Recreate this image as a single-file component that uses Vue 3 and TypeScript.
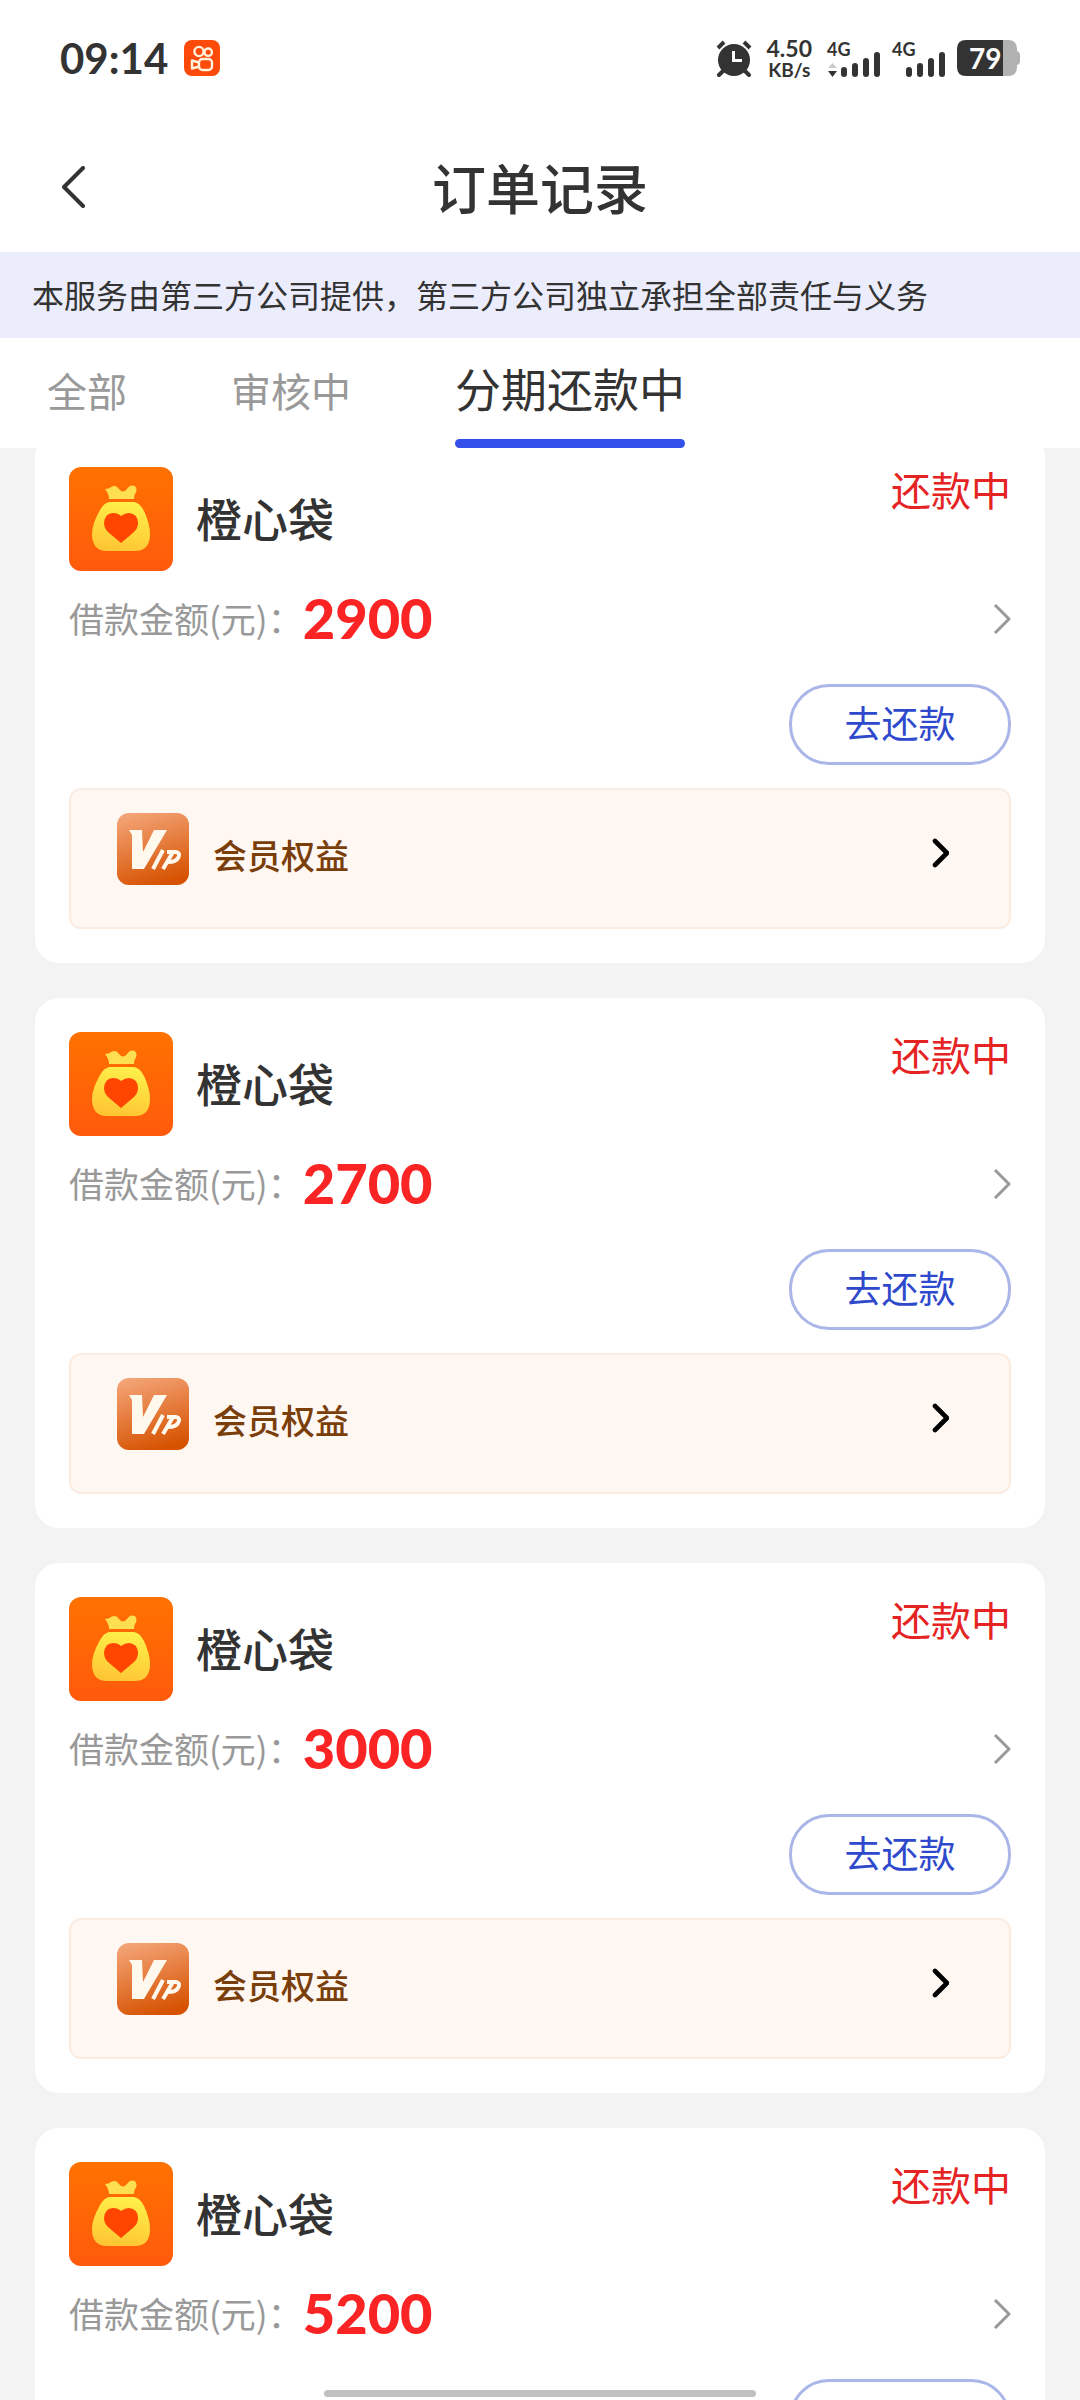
<script setup lang="ts">
import { ref } from 'vue'

interface Order {
  id: number
  name: string
  amount: number
  status: string
}

const tabs: string[] = ['全部', '审核中', '分期还款中']
const activeTab = ref<number>(2)

const orders: Order[] = [
  { id: 1, name: '橙心袋', amount: 2900, status: '还款中' },
  { id: 2, name: '橙心袋', amount: 2700, status: '还款中' },
  { id: 3, name: '橙心袋', amount: 3000, status: '还款中' },
  { id: 4, name: '橙心袋', amount: 5200, status: '还款中' },
]

const signals: { id: string; data: boolean }[] = [
  { id: 'sim1', data: true },
  { id: 'sim2', data: false },
]
</script>

<template>
  <div class="screen">
    <header class="top">
      <div class="status-bar">
        <div class="status-left">
          <span class="clock">09:14</span>
          <svg class="app-badge" width="36" height="36" viewBox="0 0 36 36" aria-hidden="true">
            <rect width="36" height="36" rx="8" fill="#fb4a0a" />
            <g fill="none" stroke="#fff1dc" stroke-width="2.4" stroke-linejoin="round">
              <circle cx="15" cy="11.5" r="4.6" />
              <circle cx="24.2" cy="12.2" r="3.7" />
              <rect x="15" y="19" width="13" height="11" rx="3.5" />
              <path d="M15 22.5 L8 20.5 V28.5 L15 26.5" />
            </g>
          </svg>
        </div>
        <div class="status-right">
          <svg class="alarm" width="36" height="37" viewBox="0 0 36 37" aria-hidden="true">
            <circle cx="18" cy="20" r="16" fill="#333" />
            <path d="M2 8 L8 2 M34 8 L28 2" stroke="#333" stroke-width="4" />
            <path d="M7 31 L3 35 M29 31 L33 35" stroke="#333" stroke-width="4" stroke-linecap="round" />
            <path d="M17.500 11 V20.500 H26" fill="none" stroke="#fff" stroke-width="3" />
          </svg>
          <div class="speed">
            <span class="speed-value">4.50</span>
            <span class="speed-unit">KB/s</span>
          </div>
          <div v-for="s in signals" :key="s.id" class="signal">
            <span class="net">4G</span>
            <svg width="53" height="38" viewBox="0 0 53 38" aria-hidden="true">
              <path v-if="s.data" d="M1 29 L5.500 24 L10 29 Z" fill="#ccc" />
              <path v-if="s.data" d="M1 32 L5.500 38 L10 32 Z" fill="#333" />
              <g fill="#333">
                <rect x="14" y="28" width="6" height="10" rx="3" />
                <rect x="25" y="24" width="6" height="14" rx="3" />
                <rect x="36" y="19" width="6" height="19" rx="3" />
                <rect x="47" y="13" width="6" height="25" rx="3" />
              </g>
            </svg>
          </div>
          <div class="battery">
            <svg width="63" height="36" viewBox="0 0 63 36" aria-hidden="true">
              <path d="M46 0 H51 Q60 0 60 9 V11 Q63 12 63 15 V21 Q63 24 60 25 V27 Q60 36 51 36 H46 Z" fill="#b1b1b1" />
              <path d="M9 0 H46 V36 H9 Q0 36 0 27 V9 Q0 0 9 0 Z" fill="#333" />
            </svg>
            <span class="level">79</span>
          </div>
        </div>
      </div>

      <div class="nav">
        <button class="back" type="button" aria-label="返回">
          <svg width="24" height="42" viewBox="0 0 24 42">
            <path d="M21 2 L2 21 L21 40" fill="none" stroke="#333" stroke-width="4" stroke-linecap="round" stroke-linejoin="round" />
          </svg>
        </button>
        <h1 class="title">订单记录</h1>
      </div>

      <p class="notice">本服务由第三方公司提供，第三方公司独立承担全部责任与义务</p>

      <nav class="tabs">
        <button
          v-for="(tab, i) in tabs"
          :key="tab"
          type="button"
          class="tab"
          :class="{ active: i === activeTab }"
          @click="activeTab = i"
        >
          {{ tab }}
        </button>
      </nav>
    </header>

    <main class="list">
      <article v-for="order in orders" :key="order.id" class="card">
        <div class="card-head">
          <svg class="logo" width="104" height="104" viewBox="0 0 104 104" aria-hidden="true">
            <defs>
              <linearGradient :id="'bg' + order.id" x1="0" y1="0" x2="0" y2="1">
                <stop offset="0" stop-color="#ff7200" />
                <stop offset="1" stop-color="#ff5a0c" />
              </linearGradient>
              <linearGradient :id="'bag' + order.id" x1="0.6" y1="0" x2="0.4" y2="1">
                <stop offset="0" stop-color="#fff04a" />
                <stop offset="1" stop-color="#ffc533" />
              </linearGradient>
            </defs>
            <rect width="104" height="104" rx="12" :fill="`url(#bg${order.id})`" />
            <path
              d="M36 22 Q40 22 42 20 Q47 17 50 22 Q54 27 58 22 Q61 17 66 19 Q69 23 66 27 Q65 29 65 32 H40 Q40 27 36 22 Z"
              fill="#ffdf52"
            />
            <path
              d="M40 35 H65 Q71 36 75 44 Q81 57 81 67 Q81 84 66 84 H38 Q23 84 23 67 Q23 57 31 43 Q35 36 40 35 Z"
              :fill="`url(#bag${order.id})`"
            />
            <path
              d="M52 76 L39 65 Q35 61 35 56 Q36 46 44 46 Q49 46 52 49 Q56 46 60 46 Q69 47 69 56 Q69 61 65 65 Z"
              fill="#ff4500"
            />
          </svg>
          <h2 class="name">{{ order.name }}</h2>
          <span class="state">{{ order.status }}</span>
        </div>

        <div class="amount-row">
          <span class="label">借款金额(元)：</span>
          <strong class="amount">{{ order.amount }}</strong>
          <svg class="more" width="18" height="32" viewBox="0 0 18 32" aria-hidden="true">
            <path d="M2 3 L16 17 L2 31" fill="none" stroke="#999" stroke-width="3" stroke-linejoin="round" />
          </svg>
        </div>

        <div class="actions">
          <button class="repay" type="button">去还款</button>
        </div>

        <a class="vip" href="#">
          <svg width="72" height="72" viewBox="0 0 72 72" aria-hidden="true">
            <defs>
              <linearGradient :id="'vip' + order.id" x1="0.3" y1="0" x2="0.6" y2="1">
                <stop offset="0" stop-color="#f3a274" />
                <stop offset="1" stop-color="#d65200" />
              </linearGradient>
            </defs>
            <rect width="72" height="72" rx="12" :fill="`url(#vip${order.id})`" />
            <path d="M12 17 H25 L26 39 L37 17 H50 L27 56 H15 V22 Z" fill="#fff8ec" />
            <g fill="none" stroke="#fff8ec" stroke-width="4">
              <path d="M46 37 L36 56" />
              <path d="M56 39 L46 56 M50 39 H59 Q64 40 61 45 Q59 49 51 49" />
            </g>
          </svg>
          <span class="vip-text">会员权益</span>
          <svg width="18" height="80" viewBox="0 0 18 80" aria-hidden="true">
            <path d="M4 28 L16 40 L4 52" fill="none" stroke="#000" stroke-width="4.600" stroke-linecap="round" stroke-linejoin="round" />
          </svg>
        </a>
      </article>
    </main>

    <div class="home-bar"></div>
  </div>
</template>

<style>
body {
  background: #f3f3f3;
}
</style>

<style scoped>
.screen {
  position: relative;
  display: flex;
  flex-direction: column;
  height: 100vh;
  overflow: hidden;
  background: #f3f3f3;
  color: #333;
  font-family: 'Noto Sans CJK SC', sans-serif;
}

.screen * {
  box-sizing: border-box;
}

button {
  padding: 0;
  border: 0;
  background: none;
  color: inherit;
  font-family: inherit;
}

svg {
  display: block;
  flex: none;
}

.top {
  position: relative;
  z-index: 1;
  flex: none;
  background: #fff;
}

.status-bar {
  display: flex;
  align-items: center;
  justify-content: space-between;
  height: 116px;
  padding: 0 60px;
  font-family: Lato, sans-serif;
  font-weight: 700;
}

.status-left,
.status-right {
  display: flex;
  align-items: center;
}

.status-left {
  gap: 16px;
}

.status-right {
  gap: 12px;
}

.clock {
  font-size: 42px;
  line-height: 48px;
}

.speed {
  display: flex;
  flex-direction: column;
  align-items: center;
  padding: 0 3px;
}

.speed-value {
  font-size: 23px;
  line-height: 24px;
}

.speed-unit {
  font-size: 19px;
  line-height: 20px;
}

.signal,
.battery {
  display: grid;
}

.signal > *,
.battery > * {
  grid-area: 1 / 1;
}

.net {
  font-size: 18px;
  line-height: 20px;
}

.level {
  z-index: 1;
  padding-left: 12px;
  color: #fff;
  font-size: 28px;
  line-height: 36px;
}

.nav {
  display: grid;
  grid-template-columns: 24px 1fr 24px;
  align-items: center;
  height: 136px;
  padding: 6px 62px 0;
}

.back {
  width: 24px;
}

.title {
  margin: 0;
  font-size: 54px;
  font-weight: 500;
  line-height: 64px;
  text-align: center;
}

.notice {
  margin: 0;
  padding: 20px 32px 22px;
  background: #ebedfc;
  font-size: 32px;
  line-height: 44px;
}

.tabs {
  display: flex;
  align-items: stretch;
  gap: 104px;
  height: 110px;
  padding: 0 47px;
}

.tab {
  padding-top: 2px;
  border-bottom: 9px solid transparent;
  color: #999;
  font-size: 40px;
  line-height: 98px;
}

.tab.active {
  position: relative;
  padding: 0 0 4px;
  color: #333;
  font-size: 46px;
}

.tab.active::after {
  position: absolute;
  right: 0;
  bottom: -9px;
  left: 0;
  height: 9px;
  border-radius: 5px;
  background: #3350ea;
  content: '';
}

.list {
  display: flex;
  flex: 1;
  flex-direction: column;
  gap: 35px;
  min-height: 0;
  margin-top: -15px;
  padding: 0 35px;
}

.card {
  flex: none;
  padding: 34px;
  border-radius: 24px;
  background: #fff;
}

.card-head {
  display: flex;
  align-items: center;
}

.name {
  flex: 1;
  margin: 0 0 0 23px;
  padding-bottom: 5px;
  font-size: 46px;
  font-weight: 500;
  line-height: 60px;
}

.state {
  align-self: flex-start;
  color: #e52323;
  font-size: 40px;
  line-height: 44px;
}

.amount-row {
  display: flex;
  align-items: center;
  height: 94px;
}

.label {
  color: #999;
  font-size: 35px;
  line-height: 48px;
}

.amount {
  flex: 1;
  color: #fb2424;
  font: 900 56px/64px Lato, sans-serif;
}

.actions {
  display: flex;
  justify-content: flex-end;
  padding: 19px 0 23px;
}

.repay {
  width: 222px;
  height: 81px;
  padding-bottom: 5px;
  border: 3px solid #abb6e8;
  border-radius: 40px;
  color: #2f49cc;
  font-size: 37px;
  line-height: 48px;
}

.vip {
  display: flex;
  align-items: flex-start;
  height: 141px;
  padding: 23px 60px 0 46px;
  border: 2px solid #fbece2;
  border-radius: 12px;
  background: #fff7f1;
  color: #7a3e0a;
  text-decoration: none;
}

.vip-text {
  flex: 1;
  margin-left: 24px;
  font-size: 34px;
  font-weight: 500;
  line-height: 84px;
}

.home-bar {
  position: absolute;
  bottom: 3px;
  left: 50%;
  z-index: 2;
  width: 432px;
  height: 7px;
  margin-left: -216px;
  border-radius: 4px;
  background: #c1c1c1;
}
</style>
